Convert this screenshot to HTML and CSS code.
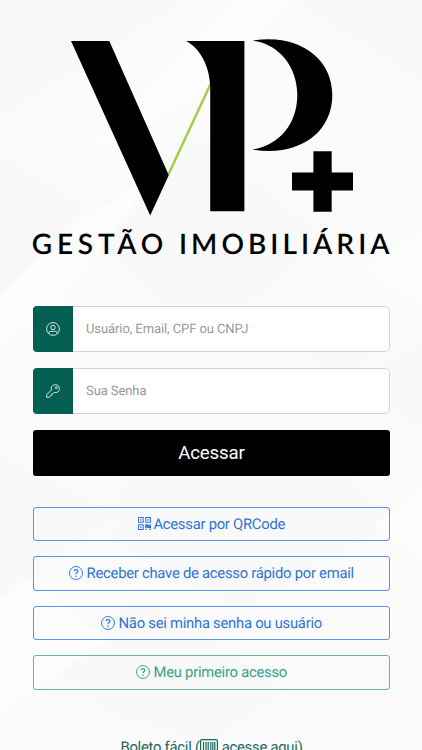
FILE: index.html
```html
<!DOCTYPE html>
<html lang="pt-BR">
<head>
<meta charset="utf-8">
<meta name="viewport" content="width=device-width, initial-scale=1">
<title>VP+ Gestão Imobiliária</title>
<link rel="stylesheet" href="styles.css">
</head>
<body>
<svg class="backdrop" viewBox="0 0 422 750" aria-hidden="true">
  <path fill="#f9f9f9" d="M0 0H190L0 120ZM0 153L88 206L0 298ZM75 225L200 135L330 240L200 345ZM290 0L422 85V0ZM0 453L120 515L0 597ZM422 340L345 385L422 430Z"/>
  <path fill="#f9f9f9" d="M130 440L300 440L400 520L240 610L110 540ZM20 640L150 600L290 690L210 745L110 715ZM290 345L350 310L390 345L340 385Z"/>
  <path fill="#fdfdfd" d="M0 298L75 225L160 170L60 300L0 345ZM210 90L290 0H240L90 150ZM422 490L375 525L422 560ZM0 600L30 580L110 640L0 710ZM422 230L365 270L422 305Z"/>
</svg>
<main class="login">
  <svg class="logo" viewBox="0 0 357 222" role="img">
    <path class="accent" d="M135.400 134.500L177.600 44"/>
    <path d="M38 1H76.300L135.800 135.200L117.200 175.500ZM153 1H211.400V171.200H177.200V46C176.500 25 166 7.500 153 1ZM219.500 .6C264-7 299.300 17 299.300 55C299.300 94 264 117 219.500 109.500C246 105.500 264.300 84 264.300 55C264.300 27 246 4 219.500 .6ZM280.400 111.300H298.700V132.600H320V150.500H298.700V171.700H280.400V150.500H259V132.600H280.400Z"/>
    <text x="-1.200" y="213.800" textLength="131.500">GESTÃO</text>
    <text x="146" y="213.800" textLength="210.500">IMOBILIÁRIA</text>
  </svg>
  <form class="form">
    <label class="field">
      <span class="tag"><svg class="icon" viewBox="0 0 16 16"><circle cx="8" cy="8" r="7.300"/><circle cx="8" cy="6.300" r="2.500"/><path d="M3.200 13.300V12.500Q3.200 10.700 5 10.700H11Q12.800 10.700 12.800 12.500V13.300"/></svg></span>
      <input class="input" type="text" placeholder="Usuário, Email, CPF ou CNPJ">
    </label>
    <label class="field">
      <span class="tag"><svg class="icon" viewBox="0 0 16 16"><path d="M6.200 6.800C5.400 3.300 7.500.8 10.700.8C13.500.8 15.300 2.700 15.300 5.300C15.300 8.500 12.800 10.500 9.300 9.800L8.100 11H6.800V12.300L5.700 12.500L5.400 13.800L4 15.200H.8V12.200Z"/><circle cx="11.800" cy="4.200" r="1.100"/></svg></span>
      <input class="input" type="password" placeholder="Sua Senha">
    </label>
    <button class="submit" type="button">Acessar</button>
  </form>
  <nav class="actions">
    <a class="action"><svg class="icon qr" viewBox="0 0 14 14"><path d="M.6 .6H5.600V5.600H.6ZM8.400 .6H13.400V5.600H8.400ZM.6 8.400H5.600V13.400H.6Z"/><path class="solid" d="M2.300 2.300H3.900V3.900H2.300ZM10.100 2.300H11.700V3.900H10.100ZM2.300 10.100H3.900V11.700H2.300ZM7.800 7.800H10.500L12.200 9.300V8H14V12H10.800L9.500 10.800V12H7.800ZM8 13H9.300V14H8ZM12.300 13H14V14H12.300Z"/></svg>Acessar por QRCode</a>
    <a class="action"><svg class="icon help" viewBox="0 0 16 16"><circle cx="8" cy="8" r="7.400"/><path class="mark" d="M5.900 6.100C5.900 3.500 10.200 3.600 10.200 5.900C10.200 7.500 8 7.600 8 9.300"/><circle class="solid" cx="8" cy="11.700" r=".85"/></svg>Receber chave de acesso rápido por email</a>
    <a class="action"><svg class="icon help" viewBox="0 0 16 16"><circle cx="8" cy="8" r="7.400"/><path class="mark" d="M5.900 6.100C5.900 3.500 10.200 3.600 10.200 5.900C10.200 7.500 8 7.600 8 9.300"/><circle class="solid" cx="8" cy="11.700" r=".85"/></svg>Não sei minha senha ou usuário</a>
    <a class="action first"><svg class="icon help" viewBox="0 0 16 16"><circle cx="8" cy="8" r="7.400"/><path class="mark" d="M5.900 6.100C5.900 3.500 10.200 3.600 10.200 5.900C10.200 7.500 8 7.600 8 9.300"/><circle class="solid" cx="8" cy="11.700" r=".85"/></svg>Meu primeiro acesso</a>
  </nav>
  <a class="boleto"><span>Boleto fácil (</span><svg class="barcode" viewBox="0 0 18 16"><rect x=".6" y=".6" width="16.800" height="14.800" rx="1.500"/><path d="M3.500 3V13M6 3V13M8.200 3V13M10.800 3V13M12.800 3V13M14.800 3V13"/></svg><span>acesse aqui)</span></a>
</main>
</body>
</html>
```
FILE: styles.css
```css
* {
  box-sizing: border-box;
}

body {
  margin: 0;
  height: 750px;
  overflow: hidden;
  position: relative;
  background: #fbfbfb;
  font-family: Roboto, "Liberation Sans", sans-serif;
  text-rendering: geometricPrecision;
}

.backdrop {
  position: absolute;
  inset: 0;
  width: 422px;
  height: 750px;
  z-index: -1;
}

.login {
  width: 357px;
  margin: 0 32px 0 33px;
  padding-top: 40px;
  display: flex;
  flex-direction: column;
}

.logo {
  display: block;
  width: 357px;
  height: 222px;
  overflow: visible;
}

.logo text {
  font: 600 28px Lato, sans-serif;
}

.accent {
  stroke: #a2cf45;
  stroke-width: 2.5;
}

.form {
  display: flex;
  flex-direction: column;
  gap: 15.5px;
  margin-top: 43.5px;
}

.field {
  display: flex;
  height: 46.500px;
  border: 1px solid #d5d5d5;
  border-radius: 5px;
  background: #fff;
}

.tag {
  display: flex;
  align-items: center;
  justify-content: center;
  width: 40px;
  margin: -1px 0 -1px -1px;
  border-radius: 4px 0 0 4px;
  background: #045f53;
  color: #d8eeea;
}

.icon {
  width: 14px;
  height: 14px;
  flex: none;
  fill: none;
  stroke: currentColor;
  stroke-width: 1.1;
}

.input {
  flex: 1;
  min-width: 0;
  border: 0;
  padding: 1px 13px 0;
  background: none;
  font: 13px Roboto, sans-serif;
  letter-spacing: -.09px;
  text-rendering: geometricPrecision;
}

.input::placeholder {
  color: #999;
  opacity: 1;
}

.submit {
  height: 46.500px;
  border: 0;
  border-radius: 3px;
  background: #000;
  color: #fff;
  font: 18.700px Roboto, sans-serif;
  letter-spacing: -.15px;
}

.actions {
  display: flex;
  flex-direction: column;
  gap: 15px;
  margin-top: 30.500px;
}

.action {
  display: flex;
  align-items: center;
  justify-content: center;
  gap: 3.500px;
  height: 34.500px;
  border: 1px solid #5a95e8;
  border-radius: 3px;
  color: #2d75d6;
  font-size: 14.8px;
  letter-spacing: -.25px;
}

.qr {
  width: 13px;
  height: 13px;
  margin-right: -1px;
}

.solid {
  fill: currentColor;
  stroke: none;
}

.mark {
  stroke-width: 1.4;
}

.first {
  border-color: #5bb9a7;
  color: #35a18d;
}

.boleto {
  display: flex;
  align-items: center;
  justify-content: center;
  margin-top: 47px;
  color: #17695b;
  font-size: 14.8px;
  letter-spacing: -.25px;
  line-height: 20px;
}

.barcode {
  width: 18px;
  height: 16px;
  margin-right: 4px;
  fill: none;
  stroke: currentColor;
  stroke-width: 1.2;
}
```
